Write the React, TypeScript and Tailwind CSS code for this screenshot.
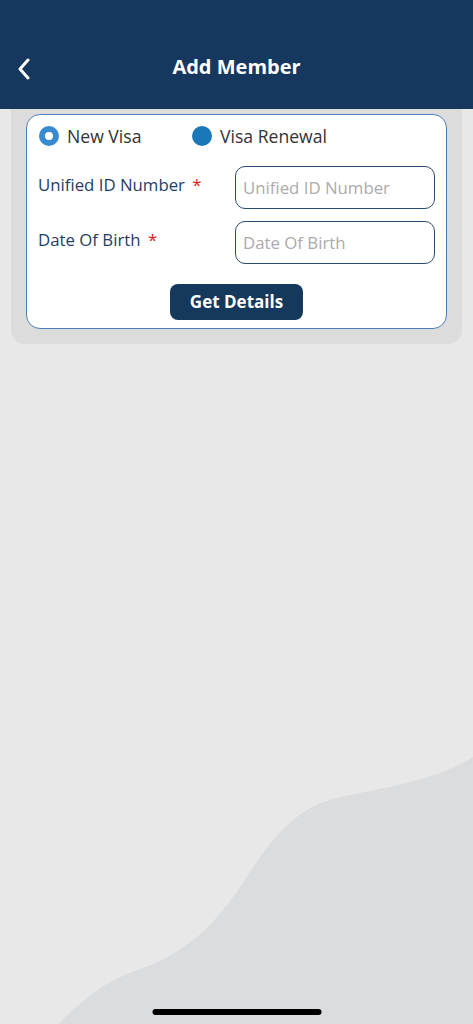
import { useState } from "react";

const AddMemberPage = () => {
  const [visaType, setVisaType] = useState<"new" | "renewal">("new");

  return (
    <div
      className="relative min-h-[1024px] w-full overflow-hidden bg-[#e8e8e8]"
      style={{ fontFamily: '"Open Sans", "Noto Sans", sans-serif' }}
    >
      {/* background wave */}
      <svg
        className="pointer-events-none absolute inset-0 h-[1024px] w-full"
        viewBox="0 0 473 1024"
        preserveAspectRatio="none"
      >
        <path
          d="M58 1024 C 88 995, 108 980, 138 970 C 188 952, 215 925, 245 880 C 275 832, 300 806, 340 797 C 400 785, 440 778, 473 757 L 473 1024 Z"
          fill="#dbdcde"
        />
      </svg>

      <div className="relative">
        <header className="flex h-[109px] items-end bg-[#16385e] pb-[29px]">
          <button className="flex w-[46px] justify-center pl-[1px] text-white">
            <svg width="14" height="22" viewBox="0 0 14 22" fill="none">
              <path
                d="M11 2 L3 11 L11 20"
                stroke="white"
                strokeWidth="3"
                strokeLinecap="round"
                strokeLinejoin="round"
              />
            </svg>
          </button>
          <h1 className="flex-1 pr-[46px] text-center text-[20px] font-bold leading-[26px] text-white">
            Add Member
          </h1>
        </header>

        <div className="mx-[11px] rounded-b-[14px] bg-[#dcdcdc] px-[15px] pt-[5px] pb-[15px]">
          <div className="rounded-[14px] border border-[#4f7db5] bg-white pl-[11px] pr-[11px] pt-[10px] pb-[8px]">
            <div className="flex items-center">
              <button
                onClick={() => setVisaType("new")}
                className="flex w-[154px] items-center gap-[8px] pl-[1px]"
              >
                {visaType === "new" ? (
                  <span className="h-[20px] w-[20px] rounded-full border-[6px] border-[#3a8ad0] bg-white" />
                ) : (
                  <span className="h-[20px] w-[20px] rounded-full bg-[#1a77b8]" />
                )}
                <span className="text-[17.6px] leading-[22px] text-[#333]">New Visa</span>
              </button>
              <button
                onClick={() => setVisaType("renewal")}
                className="flex items-center gap-[8px]"
              >
                {visaType === "renewal" ? (
                  <span className="h-[20px] w-[20px] rounded-full border-[6px] border-[#3a8ad0] bg-white" />
                ) : (
                  <span className="h-[20px] w-[20px] rounded-full bg-[#1a77b8]" />
                )}
                <span className="text-[17.6px] leading-[22px] text-[#333]">Visa Renewal</span>
              </button>
            </div>

            <div className="mt-[19px] flex flex-col gap-[12px]">
              <div className="flex items-start justify-between">
                <label className="pt-[7px] text-[16.8px] leading-[24px] text-[#1f3d63]">
                  Unified ID Number <span className="ml-[3px] text-[#e02020]">*</span>
                </label>
                <input
                  placeholder="Unified ID Number"
                  className="h-[43px] w-[200px] rounded-[10px] border-[1.5px] border-[#2d4b72] px-[7px] text-[16.8px] text-[#333] outline-none placeholder:text-[#ababab]"
                />
              </div>
              <div className="flex items-start justify-between">
                <label className="pt-[7px] text-[16.8px] leading-[24px] text-[#1f3d63]">
                  Date Of Birth <span className="ml-[3px] text-[#e02020]">*</span>
                </label>
                <input
                  placeholder="Date Of Birth"
                  className="h-[43px] w-[200px] rounded-[10px] border-[1.5px] border-[#2d4b72] px-[7px] text-[16.8px] text-[#333] outline-none placeholder:text-[#ababab]"
                />
              </div>
            </div>

            <div className="mt-[20px] flex justify-center">
              <button className="h-[36px] w-[133px] rounded-[8px] bg-[#15385d] text-[17px] font-bold text-white">
                Get Details
              </button>
            </div>
          </div>
        </div>
      </div>

      {/* home indicator */}
      <div className="absolute bottom-[9px] left-1/2 h-[6px] w-[169px] -translate-x-1/2 rounded-full bg-black" />
    </div>
  );
};

export default function App() {
  return <AddMemberPage />;
}
